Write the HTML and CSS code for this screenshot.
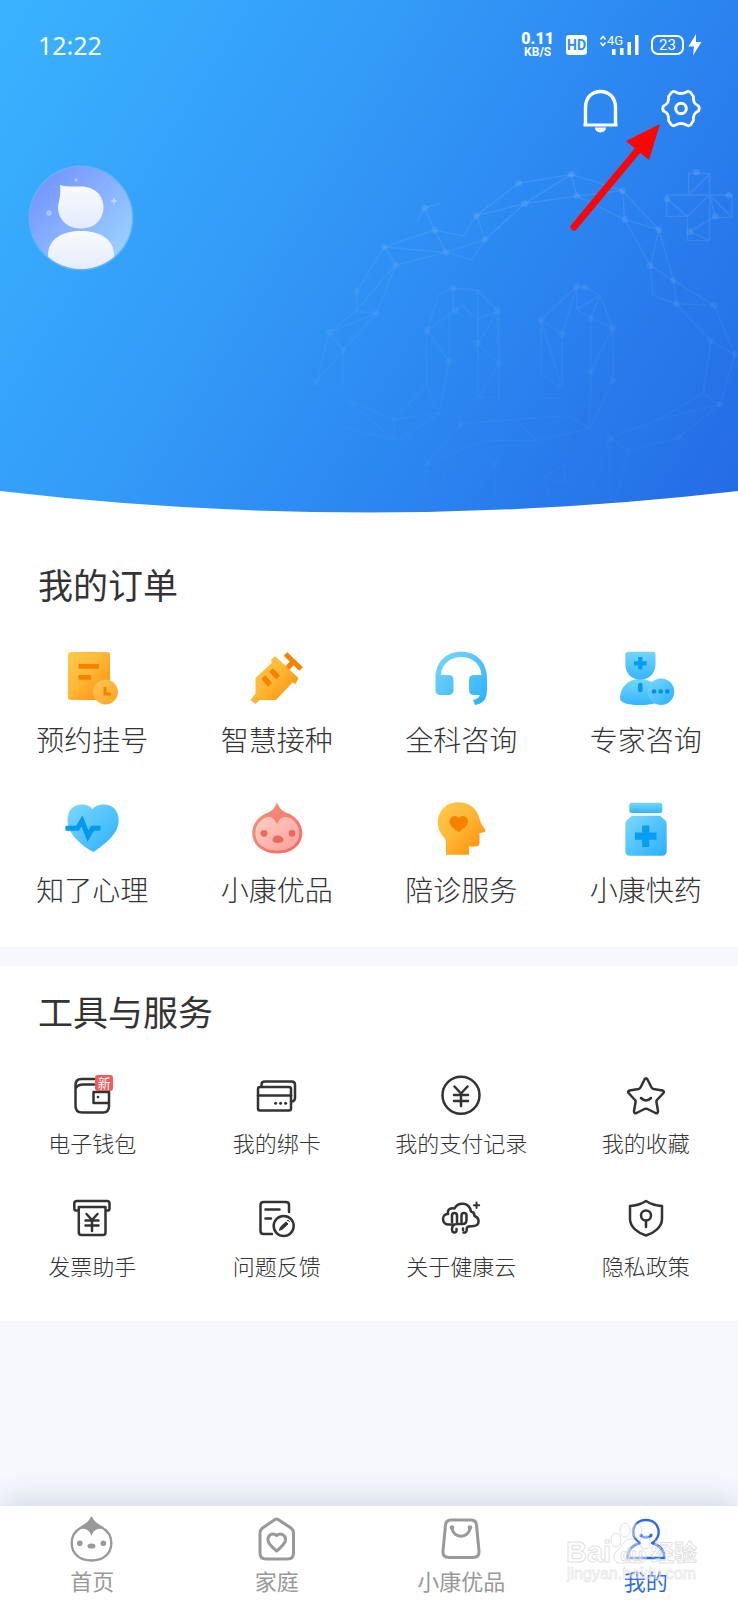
FILE: index.html
```html
<!DOCTYPE html>
<html lang="zh-CN">
<head>
    <meta charset="UTF-8">
    <meta name="viewport" content="width=device-width, initial-scale=1">
    <title>我的</title>
    <link rel="stylesheet" href="styles.css">
</head>
<body>
    <!-- 公用渐变 -->
    <svg class="defs" width="0" height="0" aria-hidden="true">
        <defs>
            <linearGradient id="orange" x1="0" y1="0" x2="1" y2="1">
                <stop offset="0" stop-color="#ffc94d"/><stop offset="0.45" stop-color="#ffb838"/><stop offset="1" stop-color="#ff8a00"/>
            </linearGradient>
            <linearGradient id="clock" x1="0" y1="0" x2="1" y2="1">
                <stop offset="0" stop-color="#ffc65a"/><stop offset="1" stop-color="#ffa51e"/>
            </linearGradient>
            <linearGradient id="blue" x1="0" y1="0" x2="1" y2="1">
                <stop offset="0" stop-color="#7cd8fb"/><stop offset="1" stop-color="#2bb0ff"/>
            </linearGradient>
            <linearGradient id="blueDown" x1="0" y1="0" x2="0" y2="1">
                <stop offset="0" stop-color="#74d6fb"/><stop offset="1" stop-color="#35b5ff"/>
            </linearGradient>
            <linearGradient id="red" x1="0" y1="0" x2="1" y2="1">
                <stop offset="0" stop-color="#f59678"/><stop offset="1" stop-color="#f7666a"/>
            </linearGradient>
            <linearGradient id="pink" x1="0" y1="0" x2="1" y2="1">
                <stop offset="0" stop-color="#ffd0c4"/><stop offset="1" stop-color="#ff9c98"/>
            </linearGradient>
            <linearGradient id="face" x1="0" y1="0" x2="1" y2="1">
                <stop offset="0.1" stop-color="#7393ff"/><stop offset="1" stop-color="#a3dcff"/>
            </linearGradient>
            <linearGradient id="bodyWhite" x1="0" y1="0" x2="0" y2="1">
                <stop offset="0" stop-color="#f8faff"/><stop offset="1" stop-color="#e4ebfc"/>
            </linearGradient>
            <linearGradient id="mesh" gradientUnits="userSpaceOnUse" x1="0" y1="60" x2="0" y2="1080">
                <stop offset="0" stop-color="#8cc6ff" stop-opacity="0.2"/>
                <stop offset="0.45" stop-color="#7ab8ff" stop-opacity="0.11"/>
                <stop offset="1" stop-color="#6aaeff" stop-opacity="0.04"/>
            </linearGradient>
        </defs>
    </svg>

    <header class="hero">
        <!-- 背景网格 -->
        <svg class="mesh" viewBox="0 0 1314 1140" aria-hidden="true">
            <g fill="none" stroke="url(#mesh)" stroke-width="4">
                <path d="M420 160L374 174L404 240L253 291L170 424V485L230 489L287 345L438 307L404 240L490 258L529 197L656 100L814 73L967 122L1077 239L1120 391L1243 466L1305 614L1260 764L1136 862L985 902L930 865L1076 808L1210 730L1232 573L1129 461L1243 466"/>
                <path d="M374 174L352 215M253 291L287 345L165 485L88 547L130 600L230 489L88 547L48 697L130 600V715M253 291L438 307L556 268L529 197L673 161L814 73L831 138L673 161L556 268L515 330L438 307M831 138L974 208L967 122L831 138M974 208L1077 239L1051 347L974 208M1051 347L1120 391L1129 461L1058 436L1051 347M1232 573L1305 614M1210 730L1260 764L1076 808"/>
                <path d="M459 414L533 420L591 481L597 640L535 742H597V481L533 508L485 465L459 485L382 541L415 436L459 414V485M533 420V742M382 541L447 635V485M382 541V705L405 770M447 635L418 790L280 808L382 705M531 580L597 640M535 508V580L591 481"/>
                <path d="M722 510L830 410L854 412L900 437L938 534V693M830 410V475L900 437L830 480L873 504L938 534L873 665L868 835L938 693M722 510L787 552V715L722 510V672L790 715M787 552L830 410M873 504V665M900 437L873 504M720 745H787"/>
                <path d="M137 748L280 808L287 872L137 748M130 832L287 872L418 790M380 940L482 822L643 808L807 797L868 835L712 872L643 808M380 940L553 872H712M380 940V1045L435 965L380 940M435 965V1045M585 942L517 1035M585 942V1050M730 985L795 940V995L730 985L760 1060M930 865V1050L880 1014L830 1050M930 865L880 1014M985 902L945 1050"/>
                <path d="M1166 133V70H1229V272H1162V199H1100V135H1296V202H1246L1229 135L1162 199L1100 147M1170 130L1229 72M1229 135L1296 202M1169 245L1229 272M1169 245L1246 199"/>
            </g>
            <g fill="url(#mesh)">
                <path d="M364 174a10 10 0 1 0 20 0a10 10 0 1 0-20 0M394 240a10 10 0 1 0 20 0a10 10 0 1 0-20 0M243 291a10 10 0 1 0 20 0a10 10 0 1 0-20 0M277 345a10 10 0 1 0 20 0a10 10 0 1 0-20 0M428 307a10 10 0 1 0 20 0a10 10 0 1 0-20 0M519 197a10 10 0 1 0 20 0a10 10 0 1 0-20 0M546 268a10 10 0 1 0 20 0a10 10 0 1 0-20 0M646 100a10 10 0 1 0 20 0a10 10 0 1 0-20 0M663 161a10 10 0 1 0 20 0a10 10 0 1 0-20 0M804 73a10 10 0 1 0 20 0a10 10 0 1 0-20 0M821 138a10 10 0 1 0 20 0a10 10 0 1 0-20 0M957 122a10 10 0 1 0 20 0a10 10 0 1 0-20 0M964 208a10 10 0 1 0 20 0a10 10 0 1 0-20 0M1067 239a10 10 0 1 0 20 0a10 10 0 1 0-20 0M1041 347a10 10 0 1 0 20 0a10 10 0 1 0-20 0M1110 391a10 10 0 1 0 20 0a10 10 0 1 0-20 0M1119 461a10 10 0 1 0 20 0a10 10 0 1 0-20 0M1233 466a10 10 0 1 0 20 0a10 10 0 1 0-20 0M1222 573a10 10 0 1 0 20 0a10 10 0 1 0-20 0M1295 614a10 10 0 1 0 20 0a10 10 0 1 0-20 0"/>
                <path d="M160 424a10 10 0 1 0 20 0a10 10 0 1 0-20 0M220 489a10 10 0 1 0 20 0a10 10 0 1 0-20 0M78 547a10 10 0 1 0 20 0a10 10 0 1 0-20 0M120 600a10 10 0 1 0 20 0a10 10 0 1 0-20 0M38 697a10 10 0 1 0 20 0a10 10 0 1 0-20 0M449 414a10 10 0 1 0 20 0a10 10 0 1 0-20 0M455 482a10 10 0 1 0 20 0a10 10 0 1 0-20 0M581 481a10 10 0 1 0 20 0a10 10 0 1 0-20 0M372 541a10 10 0 1 0 20 0a10 10 0 1 0-20 0M521 580a10 10 0 1 0 20 0a10 10 0 1 0-20 0M587 640a10 10 0 1 0 20 0a10 10 0 1 0-20 0M437 635a10 10 0 1 0 20 0a10 10 0 1 0-20 0M820 410a10 10 0 1 0 20 0a10 10 0 1 0-20 0M844 412a10 10 0 1 0 20 0a10 10 0 1 0-20 0M712 510a10 10 0 1 0 20 0a10 10 0 1 0-20 0M777 552a10 10 0 1 0 20 0a10 10 0 1 0-20 0M863 504a10 10 0 1 0 20 0a10 10 0 1 0-20 0M928 534a10 10 0 1 0 20 0a10 10 0 1 0-20 0M863 665a10 10 0 1 0 20 0a10 10 0 1 0-20 0M928 693a10 10 0 1 0 20 0a10 10 0 1 0-20 0"/>
                <path d="M1179 67a10 10 0 1 0 20 0a10 10 0 1 0-20 0M1090 147a10 10 0 1 0 20 0a10 10 0 1 0-20 0M1276 136a10 10 0 1 0 20 0a10 10 0 1 0-20 0M1236 199a10 10 0 1 0 20 0a10 10 0 1 0-20 0M1159 245a10 10 0 1 0 20 0a10 10 0 1 0-20 0M1250 764a10 10 0 1 0 20 0a10 10 0 1 0-20 0M1126 862a10 10 0 1 0 20 0a10 10 0 1 0-20 0M920 865a10 10 0 1 0 20 0a10 10 0 1 0-20 0M472 822a10 10 0 1 0 20 0a10 10 0 1 0-20 0M370 940a10 10 0 1 0 20 0a10 10 0 1 0-20 0M575 942a10 10 0 1 0 20 0a10 10 0 1 0-20 0"/>
            </g>
        </svg>

        <div class="status">
            <span class="time">12:22</span>
            <div class="status-right">
                <div class="speed"><b>0.11</b><span>KB/S</span></div>
                <span class="hd">HD</span>
                <svg class="signal" width="40" height="22" viewBox="0 0 40 22">
                    <path d="M1.500 5.500L4 2.500L6.500 5.500M1.500 8.500L4 11.500L6.500 8.500" fill="none" stroke="#fff" stroke-width="1.600"/>
                    <text x="8" y="11" font-size="13" fill="#fff">4G</text>
                    <path d="M13 15h3.500v6H13zM21 14h3.500v7H21zM28.500 8h3.500v13h-3.500zM36 1h3.500v20H36z" fill="#fff"/>
                </svg>
                <div class="power">
                    <span class="battery">23</span>
                    <svg width="14" height="22" viewBox="0 0 14 22"><path d="M8 0L0.500 12.500H6L5 21.500L13.500 8H8z" fill="#fff"/></svg>
                </div>
            </div>
        </div>

        <div class="actions">
            <button type="button" aria-label="消息">
                <svg width="44" height="44" viewBox="0 0 44 44">
                    <path d="M7.500 37V19.500C7.500 9.500 14 3.500 22.500 3.500S37.500 9.500 37.500 19.500V37" fill="none" stroke="#fff" stroke-width="3.400"/>
                    <path d="M5.500 35.500h34v3h-34zM17 39.500h11c0 6.500-11 6.500-11 0z" fill="#fff"/>
                </svg>
            </button>
            <button type="button" aria-label="设置">
                <svg width="44" height="44" viewBox="0 0 44 44" fill="none" stroke="#fff" stroke-width="2.800" stroke-linejoin="round">
                    <path d="M12.500 4.500Q14.500 2.500 16.500 4Q22 7 27.500 4Q29.500 2.500 31.500 4.500L34.500 8.500Q33.500 15.500 39.500 18Q41 20 39.500 23Q33.500 25.500 34.500 32.500L31.500 37Q29.500 38.500 27.500 37Q22 34 16.500 37Q14.500 38.500 12.500 37L9.500 32.500Q10.500 25.500 4.500 23Q3 20 4.500 18Q10.500 15.500 9.500 8.500Z"/>
                    <circle cx="22" cy="20.500" r="5.300" stroke-width="3"/>
                </svg>
            </button>
        </div>

        <svg class="avatar" viewBox="0 0 106 106" role="img" aria-label="头像">
            <clipPath id="round"><circle cx="53" cy="53" r="51"/></clipPath>
            <circle cx="53" cy="53" r="52.500" fill="#5fb4fb"/>
            <g clip-path="url(#round)">
                <rect width="106" height="106" fill="url(#face)"/>
                <path d="M32 20Q36 21.500 52 21.500C66 21 75.500 30 75.500 42C75.500 55 66 63.500 53 63.500S30 55 30 42C31 34 33 32 32 20Z" fill="url(#bodyWhite)"/>
                <path d="M20 106V90C20 73 36 66 53 66S86 73 86 90V106Z" fill="url(#bodyWhite)"/>
                <circle cx="21" cy="48" r="2.800" fill="#a9c4ff"/>
                <circle cx="48" cy="15" r="1.800" fill="#adc2ff"/>
                <path d="M86 32l1 3 3 1-3 1-1 3-1-3-3-1 3-1z" fill="#c3dcff"/>
            </g>
        </svg>

        <svg class="curve" viewBox="0 0 738 22" preserveAspectRatio="none" aria-hidden="true"><path d="M0 0Q369 43 738 0V23H0Z" fill="#fff"/></svg>
        <svg class="arrow" viewBox="0 0 110 120" aria-hidden="true">
            <path d="M14 112L78 35" stroke="#fb0505" stroke-width="7" stroke-linecap="round"/>
            <path d="M100 9L66 26L89 45Z" fill="#fb0505"/>
        </svg>
    </header>

    <main>
        <section class="orders">
            <h2>我的订单</h2>
            <div class="grid">
                <a href="#">
                    <svg viewBox="0 0 56 56">
                        <rect x="4" y="2" width="42" height="48" rx="3" fill="url(#orange)"/>
                        <path d="M14.500 14H35v4.700H14.500zM14.500 25H27v4.700H14.500z" fill="#f58200"/>
                        <circle cx="41.500" cy="42" r="12.500" fill="url(#clock)"/>
                        <path d="M41 37v7h6" fill="none" stroke="#f58200" stroke-width="2.800"/>
                    </svg>
                    <span>预约挂号</span>
                </a>
                <a href="#">
                    <svg viewBox="0 0 56 56">
                        <path d="M26 6L49.500 28L46.500 34L43.500 32.500L27 50H10.500L6.500 54L1.500 50L6.500 43.500V28L22.500 13L22 10Z" fill="url(#orange)"/>
                        <path d="M36.500 4L52 19M44.500 11.500L38.500 18M14.500 27L21 35M22 20L29 27.500" fill="none" stroke="#f58200" stroke-width="5.200"/>
                    </svg>
                    <span>智慧接种</span>
                </a>
                <a href="#">
                    <svg viewBox="0 0 56 56">
                        <path d="M2.500 36V28C2.500 12 13 1.700 28.200 1.700S54 12 54 28V40C54 50 49 54 42 55L40 50Q45 49 47 45H41Q36 45 36 40V30Q36 25 41 25H48.500C48 14 39 7 28.200 7S8.500 14 8 25H15.500Q20.500 25 20.500 30V40Q20.500 45 15.500 45H7.500Q2.500 45 2.500 40Z" fill="url(#blue)"/>
                    </svg>
                    <span>全科咨询</span>
                </a>
                <a href="#">
                    <svg viewBox="0 0 56 56">
                        <path d="M2 48C2 37 10 29 22 29S42 37 42 48Q42 55 22 55Q2 55 2 48Z" fill="url(#blueDown)"/>
                        <path d="M10 1.700H35Q37.500 1.700 37.500 4.500V14C37.500 24 31 29.500 22.400 29.500S7.300 24 7.300 14V4.500Q7.300 1.700 10 1.700Z" fill="url(#blueDown)"/>
                        <path d="M22.300 7v12.500M16 13.300h12.600" stroke="#079dee" stroke-width="4.200"/>
                        <path d="M22.300 35v5" stroke="#0a94ea" stroke-width="4.500" stroke-linecap="round"/>
                        <circle cx="43" cy="41.700" r="13.300" fill="url(#blue)"/>
                        <g fill="#078fe4"><circle cx="36" cy="41.500" r="2.300"/><circle cx="42.700" cy="41.500" r="2.300"/><circle cx="49.300" cy="41.500" r="2.300"/></g>
                    </svg>
                    <span>专家咨询</span>
                </a>
                <a href="#">
                    <svg viewBox="0 0 56 56">
                        <path d="M28.500 9.300C33 2 54.700 1 54.700 20.500C54.700 34 40 45 29.500 52C18 46 3.500 34 3.500 20.500C3.500 1 24 2 28.500 9.300Z" fill="url(#blue)"/>
                        <path d="M1.500 28.300H13.500L18 21L24 36L28.500 28.300H36.500" fill="none" stroke="#0399f0" stroke-width="5"/>
                    </svg>
                    <span>知了心理</span>
                </a>
                <a href="#">
                    <svg viewBox="0 0 56 56">
                        <path d="M28 2.300C30 8 33 11 38 13C47 16 53.300 24 53.300 33C53.300 45 43 53.500 28.300 53.500S3.300 45 3.300 33C3.300 24 9 17 18 13C23 11 26 8 28 2.300Z" fill="url(#red)"/>
                        <path d="M28 24.300Q31 16.500 37 17C45 18 50.300 25 50.300 33C50.300 44 41 50.700 28.300 50.700S6.300 44 6.300 33C6.300 25 12 18 19 17Q25 16.500 28 24.300Z" fill="url(#pink)"/>
                        <g fill="#e86b59"><circle cx="15" cy="33.300" r="3.400"/><circle cx="43" cy="33.300" r="3.400"/><path d="M23.500 40Q24 35.500 28.800 35.500T34.500 40Q34 43 28.800 43T23.500 40Z"/></g>
                    </svg>
                    <span>小康优品</span>
                </a>
                <a href="#">
                    <svg viewBox="0 0 56 56">
                        <path d="M25 2.300C36 2.300 43 8 46 17C47.500 23 50 26 52 29.500Q53 31.500 50.500 32.500L46.500 33V42Q46.500 46.500 42 46.500H36V54.700H13V42C13 37 4.800 34 4.800 22.500C4.800 11 13.500 2.300 25 2.300Z" fill="url(#orange)"/>
                        <path d="M25.800 18C29 14 35 16 35 21.500C35 26 30 29 25.800 32C21 29 16.500 26 16.500 21.500C16.500 16 23 14 25.800 18Z" fill="#f98100"/>
                    </svg>
                    <span>陪诊服务</span>
                </a>
                <a href="#">
                    <svg viewBox="0 0 56 56">
                        <rect x="11.300" y="2.700" width="33" height="10.300" rx="2.500" fill="url(#blueDown)"/>
                        <path d="M14 15.700H42L47 20Q48.700 21.500 48.700 24V51Q48.700 55.700 44 55.700H12Q7.300 55.700 7.300 51V24Q7.300 21.500 9 20Z" fill="url(#blue)"/>
                        <path d="M27.700 25.500v21.500M17 36.200h21.500" stroke="#079df5" stroke-width="7.200"/>
                    </svg>
                    <span>小康快药</span>
                </a>
            </div>
        </section>

        <section class="tools">
            <h2>工具与服务</h2>
            <div class="grid">
                <a href="#">
                    <div class="wallet">
                        <svg viewBox="0 0 40 40">
                            <path d="M22 4H9.500Q3.500 4 3.500 10V31Q3.500 37.500 10 37.500H31Q37 37.500 37 31V17H21.500V28H37M4 13Q6 9.500 11 9.500H22"/>
                            <circle cx="26" cy="22" r="1.300" fill="#333" stroke="none"/>
                        </svg>
                        <i class="badge">新</i>
                    </div>
                    <span>电子钱包</span>
                </a>
                <a href="#">
                    <svg viewBox="0 0 40 40">
                        <path d="M4.500 11V9.500Q4.500 6.500 8 6.500H34.500Q38 6.500 38 9.500V23Q38 26.500 34 26.500"/>
                        <rect x="1" y="12" width="33" height="23.500" rx="2"/>
                        <path d="M1 20.500H34"/>
                        <g fill="#333" stroke="none"><circle cx="18.600" cy="28.200" r="1.500"/><circle cx="23.600" cy="28.200" r="1.500"/><circle cx="28.600" cy="28.200" r="1.500"/></g>
                    </svg>
                    <span>我的绑卡</span>
                </a>
                <a href="#">
                    <svg viewBox="0 0 40 40">
                        <circle cx="20" cy="20.300" r="18.500"/>
                        <path d="M13.500 11.500L20 18.500L26.500 11.500M20 18.500V31M13 20H27M13 26H27"/>
                    </svg>
                    <span>我的支付记录</span>
                </a>
                <a href="#">
                    <svg viewBox="0 0 40 40">
                        <path d="M18.500 4.500Q20 2 21.500 4.500L25.500 12.500Q26 13.500 27.500 14L36.500 15.500Q39 16.500 37 18.500L31 25Q30 26 30.500 27.500L32 36Q32 39 29.500 38L21.500 34Q20 33.500 18.500 34L10.500 38Q8 39 8 36L9.500 27.500Q10 26 9 25L3 18.500Q1 16.500 3.500 15.500L12.500 14Q14 13.500 14.500 12.500Z"/>
                        <path d="M15 23Q20 28 25 23"/>
                    </svg>
                    <span>我的收藏</span>
                </a>
                <a href="#">
                    <svg viewBox="0 0 40 40">
                        <path d="M6.500 12.500H4Q2.300 12.500 2.300 10.500V5.500Q2.300 3 5 3H35Q37.500 3 37.500 5.500V10.500Q37.500 12.500 36 12.500H33.500M6.800 9H33.500V34.500Q33.500 37 31 37H9.500Q6.800 37 6.800 34.500Z"/>
                        <path d="M14.500 16L20 22L25.500 16M20 22V33M13.500 22.500H26.500M13.500 27.500H26.500"/>
                    </svg>
                    <span>发票助手</span>
                </a>
                <a href="#">
                    <svg viewBox="0 0 40 40">
                        <path d="M32 14V7Q32 4 29 4H6.500Q3.500 4 3.500 7V33Q3.500 36 6.500 36H15M8.500 11.500H22.500M8.500 20.500H14"/>
                        <circle cx="26.700" cy="28" r="10"/>
                        <path d="M22.500 32L23.500 29L29 24L31 26L25.500 31ZM30 23L31 22L32.500 23.500" fill="#333" stroke-width="1"/>
                    </svg>
                    <span>问题反馈</span>
                </a>
                <a href="#">
                    <svg viewBox="0 0 40 40">
                        <path d="M12 26.500H9C4 27 2 24 2 21C2 17.500 4.500 16 7 16C6 11 10 9.500 13.500 10.500C17 4 28 3.500 30 13.500C33 14 33.500 16 33.500 18C39 20 39 27.500 33 28L27.500 28.500Q25.500 29 25.800 31.500Q25.500 35 22.500 34.500"/>
                        <path d="M11 24V17.500Q11 15 13.500 15T16 17.500V24M20.500 24V17.500Q20.500 15 23 15T25.500 17.500V22Q25.500 26 21.500 26H16Q11 26 11 31Q11 35 14 34.500Q16 34 15.500 31M22 30.500V32"/>
                        <path d="M35.500 4.500V10M32.800 7.200H38.200" stroke-width="2"/>
                    </svg>
                    <span>关于健康云</span>
                </a>
                <a href="#">
                    <svg viewBox="0 0 40 40">
                        <path d="M20 3Q27 7.500 36 8V21C36 29 28 35 20 37.500C12 35 4 29 4 21V8Q13 7.500 20 3Z"/>
                        <circle cx="20" cy="17.500" r="5"/>
                        <path d="M20 22.500V29"/>
                    </svg>
                    <span>隐私政策</span>
                </a>
            </div>
        </section>
    </main>

    <nav class="tabbar">
        <a href="#">
            <svg viewBox="0 0 44 44">
                <path d="M21.500 1C23 6 28 8 32 10.500C38 14 41.300 19.500 41.300 26C41.300 37 33 43.500 21.500 43.500S1.700 37 1.700 26C1.700 19.500 5 14 11 10.500C15 8 20 6 21.500 1Z"/>
                <path d="M21.500 0C24 6 30 8 35 12.500C28 10.500 23.500 13 21.500 19C19.500 13 15 10.500 8 12.500C13 8 19 6 21.500 0Z" fill="#999" stroke="none"/>
                <g fill="#999" stroke="none"><circle cx="9.800" cy="26.300" r="2.800"/><circle cx="33.300" cy="26.300" r="2.800"/><ellipse cx="21.500" cy="29" rx="4" ry="2.600"/></g>
            </svg>
            <span>首页</span>
        </a>
        <a href="#">
            <svg viewBox="0 0 44 44">
                <path d="M20 2.500Q21.500 1.500 23 2.500L36 11Q38.500 13 38.500 16V36Q38.500 42 32.500 42H11Q5 42 5 36V16Q5 13 7.500 11Z" stroke-width="3"/>
                <path d="M21.700 18.500C26 15 31 18.500 30.500 23.500C30 27 25 31 21.700 34C18 31 13.500 27 13 23.500C12.500 18.500 17 15 21.700 18.500Z" stroke-width="3"/>
            </svg>
            <span>家庭</span>
        </a>
        <a href="#">
            <svg viewBox="0 0 44 44">
                <path d="M12 3H32Q37 3 37.500 8L40 34Q40.500 40.500 34 40.500H10Q3.500 40.500 4 34L6.500 8Q7 3 12 3Z" stroke-width="3"/>
                <path d="M13 11C14 22 30 22 31 11" stroke-width="3"/>
                <g fill="#999" stroke="none"><circle cx="13" cy="10.500" r="2.300"/><circle cx="31" cy="10.500" r="2.300"/></g>
            </svg>
            <span>小康优品</span>
        </a>
        <a href="#" class="active">
            <svg viewBox="0 0 44 44">
                <path d="M16 26C5 20 8 3 22 3S39 20 28 26C36 28 40 33 40.500 41H3.500C4 33 8 28 16 26"/>
                <path d="M17 19Q22 22 27 19"/>
                <g fill="#2f6be0" stroke="none"><circle cx="17" cy="18" r="1.600"/><circle cx="27" cy="18" r="1.600"/></g>
            </svg>
            <span>我的</span>
        </a>
        <svg class="watermark" viewBox="0 0 136 66" aria-hidden="true">
            <g fill="#fff" fill-opacity="0.400" stroke="#ccc" stroke-opacity="0.600">
                <ellipse cx="50" cy="20" rx="5" ry="7"/><ellipse cx="59" cy="10" rx="5" ry="7"/><ellipse cx="71" cy="11" rx="5" ry="7"/><ellipse cx="79" cy="22" rx="5" ry="7"/>
                <path d="M65 19C72 19 73 27 78 31C84 37 79 44 71 43Q65 42 58 43C48 45 45 36 51 31C56 27 57 19 65 19Z"/>
                <text class="wm-big" x="0" y="42">Bai</text>
                <text class="wm-du" x="54" y="41">du</text>
                <text class="wm-cn" x="85" y="41">经验</text>
            </g>
            <text class="wm-url" x="1" y="59">jingyan.baidu.com</text>
        </svg>
    </nav>
</body>
</html>
```
FILE: styles.css
```css
*{
    padding: 0;
    margin: 0;
    box-sizing: border-box;
}
body{
    min-height: 100vh;
    display: flex;
    flex-direction: column;
    background-color: #f6f8fc;
    color: #333;
    font-family: "Noto Sans CJK SC", sans-serif;
}
a{
    color: inherit;
    text-decoration: none;
}
svg{
    display: block;
    overflow: visible;
}
.defs{
    position: absolute;
}

/* 顶部 */
.hero{
    position: relative;
    height: 513px;
    overflow: hidden;
    color: #fff;
    background: linear-gradient(122deg, #3ab3ff 0%, #339bf8 38%, #2b84f0 68%, #246be5 100%);
}
.mesh{
    position: absolute;
    top: 150px;
    right: 0;
    width: 438px;
    height: 380px;
}
.status{
    position: relative;
    display: flex;
    justify-content: space-between;
    align-items: center;
    height: 88px;
    padding: 2px 36px 0 38px;
    font-family: Roboto, sans-serif;
}
.time{
    font-family: "Noto Sans", sans-serif;
    font-size: 25px;
}
.status-right{
    display: flex;
    align-items: center;
    gap: 12px;
}
.speed{
    display: flex;
    flex-direction: column;
    align-items: center;
    font-size: 12px;
    line-height: 12px;
    font-weight: bold;
}
.speed b{
    font-size: 16px;
    line-height: 14px;
}
.hd{
    width: 21px;
    height: 20px;
    border-radius: 3px;
    background-color: #fff;
    color: #2f8df3;
    font-size: 14px;
    line-height: 20px;
    font-weight: bold;
    text-align: center;
}
.power{
    display: flex;
    align-items: center;
    gap: 4px;
}
.battery{
    width: 33px;
    height: 20px;
    border: 2px solid #fff;
    border-radius: 7px;
    font-size: 15px;
    line-height: 16px;
    text-align: center;
}
.actions{
    position: relative;
    display: flex;
    justify-content: flex-end;
    gap: 37px;
    padding-right: 35px;
}
.actions button{
    width: 44px;
    height: 44px;
    border: 0;
    background: none;
}
.avatar{
    position: relative;
    width: 106px;
    height: 106px;
    margin: 33px 0 0 28px;
}
.curve{
    position: absolute;
    left: 0;
    bottom: 0;
    width: 100%;
    height: 22px;
}
.arrow{
    position: absolute;
    top: 115px;
    right: 68px;
    width: 110px;
    height: 120px;
}

/* 内容 */
main{
    flex: 1;
}
section{
    background-color: #fff;
}
h2{
    padding-left: 38px;
    font-size: 35px;
    line-height: 48px;
    font-weight: 400;
}
.grid{
    display: grid;
    grid-template-columns: repeat(4, 1fr);
}
.grid a{
    display: flex;
    flex-direction: column;
    align-items: center;
    font-weight: 300;
}
.orders{
    padding: 47px 0 40px;
}
.orders .grid{
    margin-top: 42px;
    row-gap: 43px;
}
.orders a{
    gap: 15px;
    font-size: 28px;
    line-height: 36px;
}
.orders .grid svg{
    width: 56px;
    height: 56px;
}
.tools{
    margin-top: 19px;
    padding: 21px 0 41px;
}
.tools .grid{
    margin-top: 40px;
    row-gap: 41px;
}
.tools a{
    gap: 12px;
    font-size: 22px;
    line-height: 30px;
}
.tools .grid svg{
    width: 40px;
    height: 40px;
    fill: none;
    stroke: #333;
    stroke-width: 2.5;
    stroke-linecap: round;
    stroke-linejoin: round;
}
.wallet{
    position: relative;
}
.badge{
    position: absolute;
    top: 0;
    right: -1px;
    width: 18px;
    height: 16px;
    border-radius: 3px;
    background-color: #ee5b5b;
    color: #fff;
    font-size: 13px;
    line-height: 15px;
    font-style: normal;
    font-weight: 400;
    text-align: center;
}

/* 底部导航 */
.tabbar{
    position: relative;
    display: grid;
    grid-template-columns: repeat(4, 1fr);
    padding: 11px 0 5px;
    background-color: #fff;
    box-shadow: 0 -8px 26px #d3dbec;
    color: #999;
}
.tabbar a{
    display: flex;
    flex-direction: column;
    align-items: center;
    gap: 4px;
    font-size: 22px;
    line-height: 30px;
}
.tabbar a svg{
    width: 44px;
    height: 44px;
    fill: none;
    stroke: #999;
    stroke-width: 2.4;
    stroke-linecap: round;
    stroke-linejoin: round;
}
.tabbar .active{
    color: #2f6be0;
}
.tabbar .active svg{
    stroke: #2f6be0;
}
.watermark{
    position: absolute;
    right: 36px;
    bottom: 14px;
    width: 136px;
    height: 66px;
    pointer-events: none;
}
.wm-big{
    font: bold 29px "Liberation Sans", sans-serif;
}
.wm-du{
    font: bold 19px "Liberation Sans", sans-serif;
}
.wm-cn{
    font: bold 23px "Noto Sans CJK SC", sans-serif;
}
.wm-url{
    font: 16px "Liberation Sans", sans-serif;
    fill: #fff;
    fill-opacity: 0.5;
    stroke: #ccc;
    stroke-opacity: 0.4;
}
```
